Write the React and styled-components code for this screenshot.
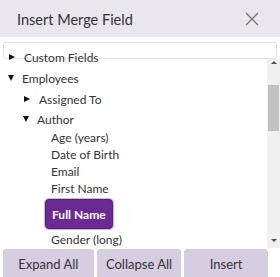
import React from 'react';
import styled, { createGlobalStyle } from 'styled-components';

const Global = createGlobalStyle`
  html, body {
    margin: 0;
    padding: 0;
    background: #ffffff;
  }
  body {
    font-family: Lato, "Open Sans", "Liberation Sans", sans-serif;
    color: #333333;
  }
`;

const Dialog = styled.div`
  width: 280px;
  height: 277px;
  overflow: hidden;
  display: flex;
  flex-direction: column;
  background: #ffffff;
`;

const Header = styled.div`
  height: 37px;
  flex: none;
  background: #e9e6ee;
  display: flex;
  align-items: center;
  justify-content: space-between;
  padding: 0 21px 0 17px;
`;

const Title = styled.div`
  font-size: 14.5px;
  color: #333333;
  margin-top: 2px;
`;

const Close = styled.button`
  border: 0;
  background: none;
  padding: 0;
  width: 14px;
  height: 14px;
  display: flex;
`;

const Search = styled.div`
  margin: 5px 3px 0 3px;
  height: 15px;
  border: 1px solid #e3e3e3;
  border-radius: 3px;
  flex: none;
`;

const Body = styled.div`
  height: 189px;
  flex: none;
  display: flex;
`;

const List = styled.ul`
  flex: 1;
  list-style: none;
  margin: -12px 0 0 0;
  padding: 0;
  font-size: 12px;
`;

const Row = styled.li`
  height: ${p => p.$h || 20}px;
  display: flex;
  align-items: center;
  padding-left: ${p => p.$indent}px;
  white-space: nowrap;
`;

const Toggle = styled.span`
  width: 0;
  height: 0;
  margin-right: ${p => (p.$open ? 8 : 9)}px;
  ${p =>
    p.$open
      ? `border-left: 3.5px solid transparent;
         border-right: 3.5px solid transparent;
         border-top: 6px solid #111;`
      : `border-top: 3.5px solid transparent;
         border-bottom: 3.5px solid transparent;
         border-left: 6px solid #111;
         margin-left: 1px;`}
`;

const Selected = styled.span`
  display: inline-flex;
  align-items: center;
  height: 28px;
  padding: 0 6px;
  margin-left: -6px;
  background: #6a2a92;
  color: #ffffff;
  font-weight: 700;
  border: 1px solid #55207a;
  border-radius: 4px;
  box-shadow: 0 0 0 1px #c9b8d6;
`;

const Scrollbar = styled.div`
  width: 13px;
  flex: none;
  background: #f0f0f0;
  display: flex;
  flex-direction: column;
  align-items: center;
`;

const Arrow = styled.span`
  width: 0;
  height: 0;
  margin: ${p => (p.$up ? '2px 0 0' : 'auto 0 6px')};
  border-left: 3px solid transparent;
  border-right: 3px solid transparent;
  ${p => (p.$up ? 'border-bottom: 3px solid #505050;' : 'border-top: 3px solid #505050;')}
`;

const Thumb = styled.div`
  width: 11px;
  height: 46px;
  margin-top: 21px;
  background: #c1c1c1;
`;

const Footer = styled.div`
  display: flex;
  gap: 3px;
  padding: 1px 12px 0 3px;
  flex: 1;
`;

const Button = styled.button`
  width: ${p => p.$w}px;
  height: 32px;
  border: 0;
  border-radius: 3px 3px 0 0;
  background: #d6cee0;
  color: #333333;
  font-family: inherit;
  font-size: 13px;
  padding: 0 0 2px;
`;

const leaves = ['Age (years)', 'Date of Birth', 'Email', 'First Name'];

export default function App() {
  return (
    <Dialog>
      <Global />
      <Header>
        <Title>Insert Merge Field</Title>
        <Close aria-label="Close">
          <svg width="14" height="14" viewBox="0 0 14 14">
            <path d="M1 1 L13 13 M13 1 L1 13" stroke="#7a7a7a" strokeWidth="1.4" fill="none" />
          </svg>
        </Close>
      </Header>
      <Search />
      <Body>
        <List>
          <Row $indent={8}><Toggle />Custom Fields</Row>
          <Row $indent={8} $h={22}><Toggle $open />Employees</Row>
          <Row $indent={23}><Toggle />Assigned To</Row>
          <Row $indent={23}><Toggle $open />Author</Row>
          {leaves.map(l => (
            <Row key={l} $indent={51} $h={17}>{l}</Row>
          ))}
          <Row $indent={51} $h={34}><Selected>Full Name</Selected></Row>
          <Row $indent={51} $h={17}>Gender (long)</Row>
        </List>
        <Scrollbar>
          <Arrow $up />
          <Thumb />
          <Arrow />
        </Scrollbar>
      </Body>
      <Footer>
        <Button $w={91}>Expand All</Button>
        <Button $w={85}>Collapse All</Button>
        <Button $w={84}>Insert</Button>
      </Footer>
    </Dialog>
  );
}
